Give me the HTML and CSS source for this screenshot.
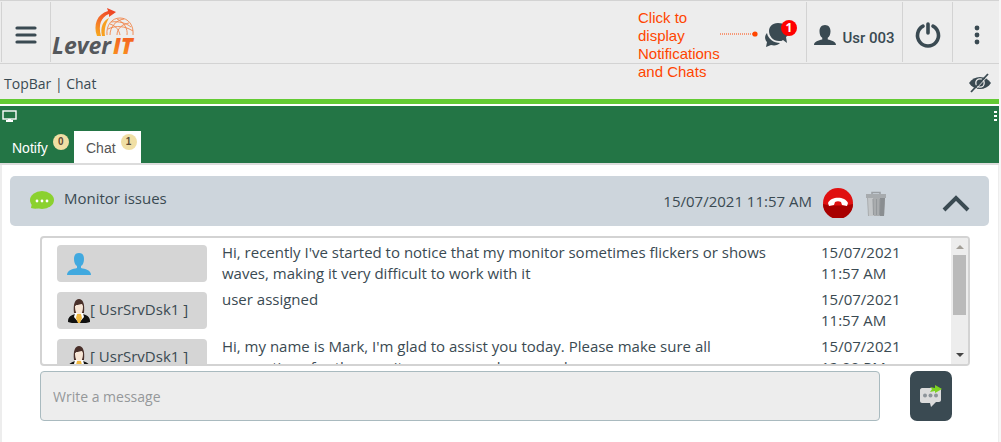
FILE: index.html
```html
<!DOCTYPE html>
<html lang="en">
<head>
<meta charset="utf-8">
<title>TopBar | Chat</title>
<link rel="stylesheet" href="styles.css">
</head>
<body>
<div class="page">
  <header class="topbar">
    <button class="cell menu" aria-label="Menu">
      <svg width="22" height="18" viewBox="0 0 22 18"><path d="M2 2h18M2 9h18M2 16h18" stroke="#3a4a52" stroke-width="3.2" stroke-linecap="round"/></svg>
    </button>
    <a class="logo" href="#" aria-label="Lever IT">
      <svg width="84" height="50" viewBox="0 0 84 50">
        <defs>
          <linearGradient id="arc" x1="0" y1="1" x2=".6" y2="0"><stop offset="0" stop-color="#f8b01c"/><stop offset=".5" stop-color="#f4702a"/><stop offset="1" stop-color="#ee4423"/></linearGradient>
          <linearGradient id="it" x1="0" y1="0" x2="0" y2="1"><stop offset="0" stop-color="#f04e23"/><stop offset="1" stop-color="#fb9a1e"/></linearGradient>
        </defs>
        <path d="M46 28C42 17 46 6 57 3l-1-3 9 4-7 5v-3c-8 3-11 11-8 22z" fill="url(#arc)"/>
        <path d="M51 28c-2-9 1-15 7-18-3 5-5 11-4 18z" fill="#f7a021"/>
        <g fill="none" stroke="#f0854a" stroke-width=".9">
          <path d="M56 27c-1-10 5-17 13-17s14 7 13 17"/>
          <path d="M59 27c0-8 6-15 14-16M66 27c0-6 5-11 12-12M76 27c1-6-3-13-10-16M69 27c-1-5-4-9-10-11M57 21c8-4 17-3 25 2M60 14c8-1 15 1 20 5"/>
        </g>
        <text x="1" y="46" class="logo-lever">Lever</text>
        <text x="62" y="46" class="logo-it" fill="url(#it)">IT</text>
      </svg>
    </a>
    <div class="spacer"></div>
    <button class="cell chats" aria-label="Notifications and chats, 1 new">
      <svg width="32" height="32" viewBox="0 0 32 32">
        <path d="M3 14c-3 3-2 7 0 9l-1 5 5-2c4 1 7 0 9-2-6 0-12-4-13-10z" fill="#3a4a52"/>
        <path d="M14 4C8 4 5 8 5 12c0 5 4 10 10 10 2 0 3 0 4-1l4 3-1-6c2-1 3-3 3-6 0-5-5-8-11-8z" fill="#3a4a52"/>
      </svg>
      <span class="alert">1</span>
    </button>
    <button class="cell user">
      <svg width="22" height="22" viewBox="0 0 24 22"><path d="M12 0C8 0 6 3 6 7c0 3 1 6 3 7v2c-4 1-9 2-9 6h24c0-4-5-5-9-6v-2c2-1 3-4 3-7 0-4-2-7-6-7z" fill="#3a4a52"/></svg>
      <span>Usr 003</span>
    </button>
    <button class="cell power" aria-label="Log out">
      <svg width="28" height="28" viewBox="0 0 28 28"><path d="M9 5.200a10.500 10.500 0 1 0 10 0M14 3v9" fill="none" stroke="#3a4a52" stroke-width="3.600" stroke-linecap="round"/></svg>
    </button>
    <button class="cell more" aria-label="More">
      <svg width="6" height="20" viewBox="0 0 6 20" fill="#3a4a52"><circle cx="3" cy="3" r="2.400"/><circle cx="3" cy="10" r="2.400"/><circle cx="3" cy="17" r="2.400"/></svg>
    </button>
    <p class="callout">Click to<br>display<br>Notifications<br>and Chats<svg class="leader" width="38" height="6" viewBox="0 0 38 6"><path d="M0 3h33" stroke="#ff4500" stroke-dasharray="1 1"/><circle cx="35" cy="3" r="2.600" fill="#ff4500"/></svg></p>
  </header>

  <div class="crumbs">
    <span>TopBar | Chat</span>
    <button aria-label="Hide">
      <svg width="22" height="20" viewBox="0 0 22 20"><path d="M0 10c5-8 17-8 22 0-5 8-17 8-22 0z" fill="#3a4a52"/><circle cx="11" cy="10" r="4.200" fill="none" stroke="#ededed" stroke-width="1.300"/><path d="M4 19L20 2" stroke="#ededed" stroke-width="1"/><path d="M2 19L19 1" stroke="#3a4a52" stroke-width="1.800"/></svg>
    </button>
  </div>

  <nav class="banner">
    <div class="tools">
      <svg width="15" height="12" viewBox="0 0 15 12"><rect x="1" y="1" width="13" height="8" fill="none" stroke="#fff" stroke-width="1.400"/><path d="M6 9h3v1h2v2H4v-2h2z" fill="#fff"/></svg>
      <svg width="4" height="12" viewBox="0 0 4 12" fill="#fff"><path d="M1 1h3v2H1zM1 5h3v2H1zM1 9h3v2H1z"/></svg>
    </div>
    <div class="tabs">
      <button class="tab">Notify <span class="count">0</span></button>
      <button class="tab active">Chat <span class="count">1</span></button>
    </div>
  </nav>

  <main class="content">
    <section class="thread">
      <svg class="bubble" width="26" height="22" viewBox="0 0 26 22"><ellipse cx="13" cy="10" rx="12" ry="9" fill="#8bd12f"/><path d="M3 13l-1 5c3 1 6 1 8 0z" fill="#8bd12f"/><g fill="#fff"><circle cx="8" cy="11" r="1.400"/><circle cx="13" cy="11" r="1.400"/><circle cx="18" cy="11" r="1.400"/></g></svg>
      <h1>Monitor issues</h1>
      <time>15/07/2021 11:57 AM</time>
      <button class="hangup" aria-label="End chat">
        <svg width="30" height="30" viewBox="0 0 30 30"><circle cx="15" cy="15" r="15" fill="#e01010"/><path d="M0 16a15 15 0 0 0 30 0c-9 2-21 2-30 0z" fill="#a80000"/><path d="M5 15c3-7 17-7 20 0l-1 3-5-1-1-3c-2-1-4-1-6 0l-1 3-5 1z" fill="#fff"/></svg>
      </button>
      <button class="trash" aria-label="Delete chat">
        <svg width="22" height="26" viewBox="0 0 22 26"><path d="M7 4V1.500h8V4" fill="none" stroke="#9a9fa3" stroke-width="1.500"/><path d="M1 3h20v4H1z" fill="#a7abae"/><path d="M2 7h18l-1 18H3z" fill="#a9acae"/><path d="M3 7h5l1 18H4z" fill="#c3c6c8"/><path d="M15 7h5l-1 18h-4z" fill="#8a8e91"/><path d="M8 8l.5 16M11.500 8v16M15 8l-.5 16" stroke="#94989b"/></svg>
      </button>
      <button class="collapse" aria-label="Collapse">
        <svg width="28" height="18" viewBox="0 0 28 18"><path d="M2 16L14 4l12 12" fill="none" stroke="#3a4a52" stroke-width="4"/></svg>
      </button>
    </section>

    <div class="log">
      <div class="messages">
        <article class="message">
          <div class="author"><svg class="guest" width="24" height="22" viewBox="0 0 24 22"><path d="M12 0C8 0 7 3 7 6c0 3 1 6 3 7v2c-4 1-10 2-10 7h24c0-5-6-6-10-7v-2c2-1 3-4 3-7 0-3-1-6-5-6z" fill="#41a9df"/></svg></div>
          <p>Hi, recently I've started to notice that my monitor sometimes flickers or shows waves, making it very difficult to work with it</p>
          <time>15/07/2021 11:57 AM</time>
        </article>
        <article class="message">
          <div class="author"><svg width="22" height="24" viewBox="0 0 22 24"><path d="M0 23c0-4 1-6 7-8h8c6 2 7 4 7 8-5 2-17 2-22 0z" fill="#111"/><path d="M7 14h8l1 4-5 6-5-6z" fill="#fff"/><path d="M9 15h4l1 4-2 5h-2l-2-5z" fill="#f0b840"/><path d="M6 14C5 5 7 0 11 0s6 5 5 14h-2V6H8v8z" fill="#4a302a"/><path d="M7 7c2-1 5-2 7-2l1 2c0 5-1 8-4 8s-4-3-4-8z" fill="#f8e6d6"/></svg><span>[ UsrSrvDsk1 ]</span></div>
          <p>user assigned</p>
          <time>15/07/2021 11:57 AM</time>
        </article>
        <article class="message">
          <div class="author"><svg width="22" height="24" viewBox="0 0 22 24"><path d="M0 23c0-4 1-6 7-8h8c6 2 7 4 7 8-5 2-17 2-22 0z" fill="#111"/><path d="M7 14h8l1 4-5 6-5-6z" fill="#fff"/><path d="M9 15h4l1 4-2 5h-2l-2-5z" fill="#f0b840"/><path d="M6 14C5 5 7 0 11 0s6 5 5 14h-2V6H8v8z" fill="#4a302a"/><path d="M7 7c2-1 5-2 7-2l1 2c0 5-1 8-4 8s-4-3-4-8z" fill="#f8e6d6"/></svg><span>[ UsrSrvDsk1 ]</span></div>
          <p>Hi, my name is Mark, I'm glad to assist you today. Please make sure all connections for the monitor are properly secured</p>
          <time>15/07/2021 12:00 PM</time>
        </article>
      </div>
      <div class="scrollbar">
        <svg width="8" height="4" viewBox="0 0 8 4"><path d="M0 4l4-4 4 4z" fill="#a39f98"/></svg>
        <div class="track"><div class="thumb"></div></div>
        <svg width="8" height="4" viewBox="0 0 8 4"><path d="M0 0l4 4 4-4z" fill="#444"/></svg>
      </div>
    </div>

    <form class="compose">
      <input type="text" placeholder="Write a message" aria-label="Write a message">
      <button type="button" class="send" aria-label="Send">
        <svg width="24" height="24" viewBox="0 0 24 24"><path d="M3 4h17c1 0 2 1 2 2v10c0 1-1 2-2 2h-3l-5 5-1-4H3c-1 0-2-1-2-2V6c0-1 1-2 2-2z" fill="#dcdcdc"/><g fill="#8d9499"><circle cx="6" cy="11.500" r="2"/><circle cx="11.500" cy="11.500" r="2"/><circle cx="17" cy="11.500" r="2"/></g><path d="M11 3l5 1V1l7 4-7 4V7l-5 1 2-3z" fill="#7ed321"/></svg>
      </button>
    </form>
  </main>
</div>
</body>
</html>
```
FILE: styles.css
```css
* { box-sizing: border-box; }
body {
  margin: 0;
  background: #ededed;
  color: #3a4a52;
  font: 15px/21px "Open Sans", "Noto Sans", sans-serif;
}
button {
  margin: 0;
  padding: 0;
  border: 0;
  background: none;
  color: inherit;
  font: inherit;
}
svg { display: block; flex: none; }
p, h1 { margin: 0; font-size: 15px; font-weight: 400; }
.page { min-height: 100vh; border-right: 2px solid #f6f6f6; display: flex; flex-direction: column; }

.topbar {
  position: relative;
  display: flex;
  height: 64px;
  padding: 1px 0 1px 1px;
  border-top: 1px solid #d3d3d3;
  border-bottom: 1px solid #d3d3d3;
}
.cell {
  display: flex;
  align-items: center;
  justify-content: center;
  border-left: 1px solid #d3d3d3;
}
.menu { width: 50px; padding-top: 6px; border-right: 1px solid #d3d3d3; }
.logo { margin-top: 6px; }
.logo-lever { font: italic 700 23px "Open Sans", sans-serif; fill: #55585c; }
.logo-it { font: italic 800 22px "Open Sans", sans-serif; }
.spacer { flex: 1; }
.chats { position: relative; width: 42px; padding-top: 6px; border-left: 0; justify-content: flex-start; }
.alert {
  position: absolute;
  left: 17px;
  top: 18px;
  width: 16px;
  height: 16px;
  border-radius: 8px;
  background: #f00;
  color: #fff;
  font: 700 12px/16px "Open Sans", sans-serif;
}
.user { width: 96px; gap: 6px; padding-top: 5px; font: 500 15px/21px Roboto, sans-serif; }
.user span { padding-top: 8px; }
.power { width: 50px; padding-top: 6px; }
.more { width: 47px; padding: 6px 0 0 2px; }
.callout {
  position: absolute;
  left: 638px;
  top: 8px;
  color: #ff4500;
  font: 15px/18px "Liberation Sans", sans-serif;
}
.leader { position: absolute; left: 82px; top: 22px; }

.crumbs {
  display: flex;
  align-items: center;
  justify-content: space-between;
  height: 35px;
  padding: 3px 8px 0 4px;
  font-size: 14px;
}
.banner {
  border-top: 5px solid #63cb33;
  border-bottom: 2px solid #dcdcdc;
  background: #237545;
}
.tools {
  display: flex;
  justify-content: space-between;
  height: 27px;
  padding: 4px 2px 0;
  border-top: 2px solid #fff;
}
.tabs { display: flex; height: 32px; }
.tab {
  display: flex;
  width: 74px;
  padding: 1px 0 0 12px;
  gap: 5px;
  color: #fff;
  font: 14px/32px "Liberation Sans", sans-serif;
}
.active { width: 67px; background: #fff; color: #555; }
.count {
  width: 16px;
  height: 16px;
  margin-top: 2px;
  border-radius: 8px;
  background: #f0dfa4;
  color: #5d4a35;
  font: 700 10px/16px "Liberation Sans", sans-serif;
}

.content {
  flex: 1;
  padding: 11px 9px 20px 8px;
  border: solid #ededed;
  border-width: 0 1px 0 2px;
  background: #fff;
}
.thread {
  display: flex;
  align-items: center;
  height: 50px;
  padding: 0 19px;
  border-radius: 5px;
  background: #cdd5dc;
}
.thread h1 { flex: 1; padding: 0 0 5px 9px; }
.hangup { margin: 4px 12px 0 11px; }
.trash { margin: 5px 55px 0 0; }
.collapse { margin-top: 4px; }
.log {
  display: flex;
  height: 130px;
  margin: 10px 19px 0 30px;
  border: 2px solid #d3d3d3;
  border-radius: 4px;
  overflow: hidden;
}
.messages { flex: 1; padding: 4px 0 0 15px; overflow: hidden; }
.message {
  display: grid;
  grid-template-columns: 150px 1fr 130px;
  margin-bottom: 5px;
}
.message p { padding: 0 40px 0 15px; }
.message time { padding-right: 40px; }
.author {
  display: flex;
  align-items: center;
  height: 37px;
  margin-top: 3px;
  padding-left: 11px;
  border-radius: 4px;
  background: #d5d5d5;
}
.author span { padding-bottom: 2px; }
.guest { margin-left: -1px; }
.scrollbar {
  display: flex;
  flex-direction: column;
  align-items: center;
  width: 17px;
  padding: 7px 0;
  background: #ededed;
}
.track { flex: 1; width: 13px; padding-top: 6px; }
.thumb { height: 60px; background: #bababa; }
.compose { display: flex; gap: 30px; margin: 5px 37px 0 30px; }
.compose input {
  flex: 1;
  min-width: 0;
  height: 50px;
  padding: 0 12px;
  border: 1px solid #a9babf;
  border-radius: 4px;
  background: #ededed;
  color: inherit;
  font: 14px/21px "Open Sans", sans-serif;
}
.compose input::placeholder { color: #95989a; }
.send {
  display: flex;
  align-items: center;
  justify-content: center;
  width: 42px;
  height: 50px;
  border-radius: 7px;
  background: #3a4a52;
}
```
